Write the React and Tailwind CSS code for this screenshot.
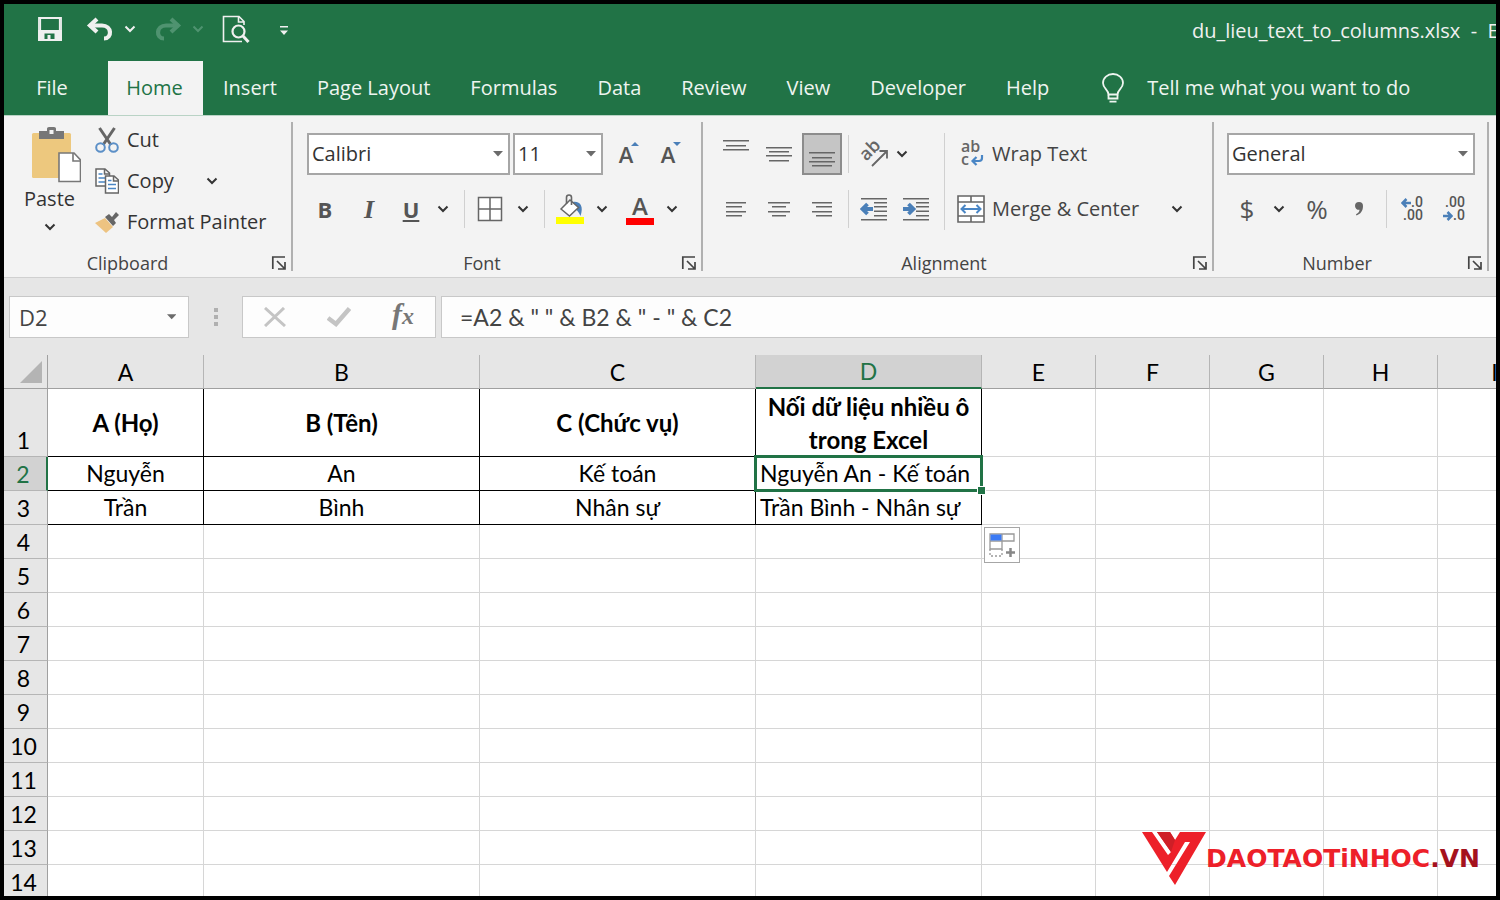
import clsx from "clsx";

const tabs = ["Insert", "Page Layout", "Formulas", "Data", "Review", "View", "Developer", "Help"];

const columns = [
  { name: "A", width: "w-[156px]" },
  { name: "B", width: "w-[276px]" },
  { name: "C", width: "w-[276px]" },
  { name: "D", width: "w-[226px]" },
  { name: "E", width: "w-[114px]" },
  { name: "F", width: "w-[114px]" },
  { name: "G", width: "w-[114px]" },
  { name: "H", width: "w-[114px]" },
  { name: "I", width: "w-[114px]" },
];

const rows = [
  ["A (Họ)", "B (Tên)", "C (Chức vụ)", "Nối dữ liệu nhiều ô trong Excel"],
  ["Nguyễn", "An", "Kế toán", "Nguyễn An - Kế toán"],
  ["Trần", "Bình", "Nhân sự", "Trần Bình - Nhân sự"],
  ...Array.from({ length: 11 }, () => []),
];

// [x, y, width] of every stroke in the alignment icons
const alignIcons = {
  top: [[1, 7, 26], [4, 12, 20], [1, 16, 26]],
  middle: [[1, 14, 26], [4, 18, 20], [1, 22, 26], [4, 27, 20]],
  bottom: [[1, 19, 26], [4, 24, 20], [1, 28, 26], [4, 32, 20]],
  left: [[4, 14, 20], [4, 18, 16], [4, 23, 20], [4, 27, 16]],
  center: [[3, 14, 22], [7, 18, 14], [3, 23, 22], [7, 27, 14]],
  right: [[4, 14, 20], [8, 18, 16], [4, 23, 20], [8, 27, 16]],
};

function Chevron({ className }) {
  return (
    <svg viewBox="0 0 12 8" className={clsx("h-2 w-3", className)} fill="none" stroke="currentColor" strokeWidth="2">
      <path d="M1.5 1.5 6 6l4.500-4.500" />
    </svg>
  );
}

function Triangle() {
  return (
    <svg viewBox="0 0 10 6" className="h-1.5 w-2.5 fill-[#6b6b6b]">
      <path d="M0 0h10L5 5.500z" />
    </svg>
  );
}

function ToolButton({ label, className = "w-10", children }) {
  return (
    <button type="button" aria-label={label} className={clsx("flex h-[42px] shrink-0 items-center justify-center text-[#555]", className)}>
      {children}
    </button>
  );
}

function ChevronButton({ label, className = "w-6" }) {
  return (
    <ToolButton label={label} className={className}>
      <Chevron className="shrink-0 text-[#333]" />
    </ToolButton>
  );
}

function Separator({ className = "ml-1.5" }) {
  return <div className={clsx("mr-1 h-[38px] w-px shrink-0 bg-[#d0d0d0]", className)} />;
}

function AlignIcon({ kind }) {
  return (
    <svg viewBox="0 0 28 42" className="h-[42px] w-7 shrink-0 fill-[#666]">
      {alignIcons[kind].map(([x, y, w]) => (
        <rect key={y} x={x} y={y} width={w} height="1.500" />
      ))}
    </svg>
  );
}

function IndentIcon({ increase }) {
  return (
    <svg viewBox="0 0 28 28" className="h-7 w-7 shrink-0">
      <g fill="#666">
        <rect x="1" y="3" width="26" height="1.500" />
        <rect x="14" y="7" width="13" height="1.500" />
        <rect x="14" y="11" width="13" height="1.500" />
        <rect x="14" y="15.500" width="13" height="1.500" />
        <rect x="14" y="20" width="13" height="1.500" />
        <rect x="1" y="24" width="26" height="1.500" />
      </g>
      <path
        d={increase ? "M1 14h10M6.500 9 11.500 14l-5 5" : "M13 14H3M7.500 9 2.500 14l5 5"}
        fill="none"
        stroke="#4a7fb8"
        strokeWidth="3.800"
      />
    </svg>
  );
}

function SelectBox({ label, value, className }) {
  return (
    <div className={clsx("relative h-[42px] shrink-0 border-2 border-[#a6a6a6] bg-white", className)}>
      <select aria-label={label} defaultValue={value} className="h-full w-full appearance-none bg-transparent pl-[3px] text-xl text-[#333] outline-none">
        <option>{value}</option>
      </select>
      <span className="pointer-events-none absolute inset-y-0 right-[5px] flex items-center">
        <Triangle />
      </span>
    </div>
  );
}

function RibbonGroup({ title, className, children }) {
  return (
    <section className={clsx("my-[6px] flex shrink-0 flex-col border-r-2 border-[#b0b0b0]", className)}>
      <div className="flex-1">{children}</div>
      <div className="flex h-4 items-center">
        <h2 className="flex-1 text-center text-lg leading-4 text-[#444]">{title}</h2>
        <button type="button" aria-label={`${title} settings`} className="flex w-10 justify-end pr-1">
          <svg viewBox="0 0 16 16" className="h-4 w-4" fill="none" stroke="#444" strokeWidth="1.700">
            <path d="M1.800 14V2H14M6 6l7.500 7.500M14 7v7H7" />
          </svg>
        </button>
      </div>
    </section>
  );
}

function TitleBar() {
  return (
    <header className="flex h-[57px] items-center text-[#f0f0f0]">
      <div className="flex shrink-0 items-center pb-2 pl-[34px]">
        <button type="button" aria-label="Save">
          <svg viewBox="0 0 24 24" className="h-6 w-6" fill="none" stroke="currentColor" strokeWidth="1.800">
            <path d="M1 1h22v22H1z" />
            <path d="M1 14h22v9H1z" fill="currentColor" />
            <path d="M2.500 2v12M21.500 2v12" strokeWidth="1.200" />
            <path d="M6.500 16.500h10V22h-10z" fill="#217346" stroke="none" />
            <path d="M9.500 18h3v5h-3z" fill="currentColor" stroke="none" />
          </svg>
        </button>
        <button type="button" aria-label="Undo" className="ml-6">
          <svg viewBox="0 0 28 24" className="h-6 w-7" fill="none" stroke="currentColor" strokeWidth="4.200">
            <path d="M11 2 4 8.500 11 15" />
            <path d="M3.500 8.500H16c10 0 10.500 13 2 13" />
          </svg>
        </button>
        <button type="button" aria-label="Undo history" className="ml-2.5"><Chevron /></button>
        <button type="button" aria-label="Redo" className="ml-[18px] text-[#4f9370]">
          <svg viewBox="0 0 28 24" className="h-6 w-7" fill="none" stroke="currentColor" strokeWidth="4.200">
            <path d="M17 2l7 6.500L17 15" />
            <path d="M24.500 8.500H12c-10 0-10.500 13-2 13" />
          </svg>
        </button>
        <button type="button" aria-label="Redo history" className="ml-2.5 text-[#4f9370]"><Chevron /></button>
        <button type="button" aria-label="Print preview" className="ml-[18px]">
          <svg viewBox="0 0 28 28" className="h-7 w-7" fill="none" stroke="currentColor" strokeWidth="1.600">
            <path d="M20 26.500H1.500v-25H17l5 5V10M16.500 1.500V7H22" />
            <circle cx="16.500" cy="16.500" r="6" strokeWidth="2.200" />
            <path d="m21 21 5.500 6" strokeWidth="3" />
          </svg>
        </button>
        <button type="button" aria-label="Customize toolbar" className="ml-[30px] pt-1">
          <svg viewBox="0 0 8 9" className="h-[9px] w-2" fill="currentColor">
            <path d="M0 0h8v1.600H0zM0 4.500h8L4 9z" />
          </svg>
        </button>
      </div>
      <h1 className="ml-auto w-[304px] shrink-0 overflow-hidden pb-1 text-xl whitespace-pre">
        {"du_lieu_text_to_columns.xlsx  -  Excel"}
      </h1>
    </header>
  );
}

function TabBar() {
  return (
    <nav className="flex h-[54px] items-stretch text-xl whitespace-nowrap text-[#eef5f0]">
      <button type="button" className="w-[104px] shrink-0 pr-2">File</button>
      <button type="button" className="w-[95px] shrink-0 bg-[#f3f3f3] pr-0.5 text-[#217346]">Home</button>
      {tabs.map((tab) => (
        <button key={tab} type="button" className="px-5">{tab}</button>
      ))}
      <button type="button" className="ml-8 flex items-center gap-[22px]">
        <svg viewBox="0 0 24 30" className="h-[30px] w-6" fill="none" stroke="currentColor" strokeWidth="1.800">
          <path d="M7.500 21.500c0-5-5.500-6-5.500-11.500a10 9 0 0 1 20 0c0 5.500-5.500 6.500-5.500 11.500z" />
          <path d="M7.500 21.500v4h9v-4M8.500 28.700h7" />
        </svg>
        Tell me what you want to do
      </button>
    </nav>
  );
}

function ClipboardGroup() {
  return (
    <RibbonGroup title="Clipboard" className="w-[289px]">
      <div className="flex">
        <button type="button" className="flex w-[91px] shrink-0 flex-col items-center pt-[5px] text-xl leading-7 text-[#333]">
          <svg viewBox="0 0 50 58" className="ml-3 h-[58px] w-[50px]">
            <rect x="1" y="6" width="39" height="45" rx="1.500" fill="#edc87e" />
            <path d="M8 4h8V1.500Q16 0 18 0h5q2 0 2 1.500V4h8v8H8z" fill="#777" />
            <rect x="18.500" y="3" width="4" height="4" fill="#f3f3f3" />
            <path d="M28 26h15l6.500 7v21.500H28z" fill="#fff" stroke="#777" strokeWidth="1.600" />
            <path d="M42 26v8h7.500" fill="none" stroke="#777" strokeWidth="1.600" />
          </svg>
          Paste
          <Chevron className="mt-2.5" />
        </button>
        <div className="flex flex-col gap-[5px] text-xl text-[#333]">
          <button type="button" className="flex h-9 items-center gap-2">
            <svg viewBox="0 0 24 26" className="h-[26px] w-6" fill="none">
              <path d="M4.500 1 16 18M19.500 1 8 18" stroke="#666" strokeWidth="3" />
              <circle cx="5.500" cy="20.500" r="4.300" stroke="#5b8fc7" strokeWidth="2" />
              <circle cx="18.500" cy="20.500" r="4.300" stroke="#5b8fc7" strokeWidth="2" />
            </svg>
            Cut
          </button>
          <div className="flex h-9 items-center">
            <button type="button" className="flex items-center gap-2">
              <svg viewBox="0 0 24 26" className="h-[26px] w-6" fill="#fff" stroke="#666" strokeWidth="1.500">
                <path d="M1 1h9l4.500 4v13H1zM9.500 1v5h5" />
                <path d="M3.500 6h4M3.500 10h7M3.500 14h7" stroke="#4a86c5" />
                <path d="M10.500 8H19l4.500 4v13h-13zM18.500 8v5h5" />
                <path d="M13 12.500h3.500M13 16.500h8M13 20.500h8" stroke="#4a86c5" />
              </svg>
              Copy
            </button>
            <ChevronButton label="Copy options" className="ml-6 w-7" />
          </div>
          <button type="button" className="flex h-9 items-center gap-2 whitespace-nowrap">
            <svg viewBox="0 0 24 24" className="h-6 w-6">
              <path d="m0 13 10-5 8 9-7 6z" fill="#edc381" />
              <path d="m10 7 4-3 3 3 4-5 3 3-5 5 2 3-3 3z" fill="#666" />
            </svg>
            Format Painter
          </button>
        </div>
      </div>
    </RibbonGroup>
  );
}

function FontGroup() {
  return (
    <RibbonGroup title="Font" className="w-[410px] pl-2.5">
      <div className="flex flex-col gap-[13px] pt-[11px]">
        <div className="ml-1 flex">
          <SelectBox label="Font" value="Calibri" className="w-[203px]" />
          <SelectBox label="Font size" value="11" className="ml-[3px] w-[90px]" />
          <ToolButton label="Increase font size" className="ml-1 w-11 text-[22px] font-semibold">
            A
            <svg viewBox="0 0 8 4" className="mb-5 -ml-0.5 h-1 w-2 fill-[#4a7fb8]"><path d="M0 4h8L4 0z" /></svg>
          </ToolButton>
          <ToolButton label="Decrease font size" className="w-10 text-[22px] font-semibold">
            A
            <svg viewBox="0 0 8 4" className="mb-5 -ml-0.5 h-1 w-2 fill-[#4a7fb8]"><path d="M0 0h8L4 4z" /></svg>
          </ToolButton>
        </div>
        <div className="flex items-center">
          <ToolButton label="Bold" className="w-11 text-[22px] font-bold">B</ToolButton>
          <ToolButton label="Italic" className="w-11 font-['Liberation_Serif',serif] text-[26px] font-bold italic">I</ToolButton>
          <ToolButton label="Underline" className="w-10 text-[22px] font-bold underline">U</ToolButton>
          <ChevronButton label="Underline options" />
          <Separator className="ml-[9px]" />
          <ToolButton label="Borders" className="w-[42px]">
            <svg viewBox="0 0 26 26" className="h-[26px] w-[26px]" fill="#fff" stroke="#666" strokeWidth="1.500">
              <path d="M1.500 1.500h23v23h-23zM13 1.500v23M1.500 13h23" />
            </svg>
          </ToolButton>
          <ChevronButton label="Border options" />
          <Separator className="ml-[9px]" />
          <ToolButton label="Fill color" className="w-[42px]">
            <svg viewBox="0 0 30 30" className="h-[30px] w-[30px]">
              <path d="M18 8c7-1 11 4 7.500 14-2-4-3-6-7.500-8z" fill="#4a7fb8" />
              <path d="m6 15 9-9 8.500 7.500L14.500 22z" fill="#fff" stroke="#666" strokeWidth="1.500" />
              <path d="M11.500 10V3.500Q11.500 1 14 1t2.500 2.500V11" fill="none" stroke="#666" strokeWidth="1.600" />
              <rect x="1" y="23" width="28" height="7" fill="#ff0" />
            </svg>
          </ToolButton>
          <ChevronButton label="Fill color options" className="w-[22px]" />
          <ToolButton label="Font color" className="ml-1.5 w-[42px] flex-col">
            <span className="text-2xl leading-6 font-semibold">A</span>
            <span className="h-[7px] w-7 bg-[#ff0000]" />
          </ToolButton>
          <ChevronButton label="Font color options" className="w-[22px]" />
        </div>
      </div>
    </RibbonGroup>
  );
}

function AlignmentGroup() {
  return (
    <RibbonGroup title="Alignment" className="w-[511px] pl-[13px]">
      <div className="flex pt-[11px]">
        <div className="flex flex-col gap-[13px]">
          <div className="flex items-center">
            <ToolButton label="Top align" className="mr-[3px] w-10"><AlignIcon kind="top" /></ToolButton>
            <ToolButton label="Middle align" className="mr-[3px] w-10"><AlignIcon kind="middle" /></ToolButton>
            <ToolButton label="Bottom align" className="w-10 border-2 border-[#8c8c8c] bg-[#c5c5c5]"><AlignIcon kind="bottom" /></ToolButton>
            <Separator />
            <ToolButton label="Orientation" className="w-[42px]">
              <svg viewBox="0 0 28 28" className="h-7 w-7 overflow-visible">
                <text textAnchor="middle" transform="translate(14 14) rotate(-45)" className="text-lg font-semibold" fill="#666">ab</text>
                <path d="M12 26 26 12M19.500 11H27v7.500" fill="none" stroke="#666" strokeWidth="1.800" />
              </svg>
            </ToolButton>
            <ChevronButton label="Orientation options" className="w-3.5" />
          </div>
          <div className="flex items-center">
            <ToolButton label="Align left" className="mr-[3px] w-10"><AlignIcon kind="left" /></ToolButton>
            <ToolButton label="Center" className="mr-[3px] w-10"><AlignIcon kind="center" /></ToolButton>
            <ToolButton label="Align right"><AlignIcon kind="right" /></ToolButton>
            <Separator />
            <ToolButton label="Decrease indent" className="w-[42px]"><IndentIcon /></ToolButton>
            <ToolButton label="Increase indent" className="w-[42px]"><IndentIcon increase /></ToolButton>
          </div>
        </div>
        <div className="ml-[7px] flex flex-col gap-[13px] border-l border-[#d0d0d0] pl-3 text-xl text-[#444]">
          <button type="button" className="flex h-[42px] items-center gap-[7px]">
            <svg viewBox="0 0 28 28" className="h-7 w-7">
              <text x="4" y="12" className="text-base font-semibold" fill="#666">ab</text>
              <text x="4" y="25" className="text-base font-semibold" fill="#666">c</text>
              <path d="M25 15v3q0 3-3 3h-6M19.500 17l-4 4 4 4" fill="none" stroke="#4a86c5" strokeWidth="2.200" />
            </svg>
            Wrap Text
          </button>
          <div className="flex items-center">
            <button type="button" className="flex h-[42px] items-center gap-[7px] whitespace-nowrap">
              <svg viewBox="0 0 28 28" className="h-7 w-7" fill="#fff" stroke="#666" strokeWidth="1.600">
                <path d="M1 1h26v26H1zM1 7h26M1 21h26M14 1v6M14 21v6" />
                <path d="M5 14h18M8.500 10 4.500 14l4 4M19.500 10l4 4-4 4" fill="none" stroke="#4a86c5" strokeWidth="2" />
              </svg>
              Merge &amp; Center
            </button>
            <ChevronButton label="Merge options" className="ml-[26px] w-6" />
          </div>
        </div>
      </div>
    </RibbonGroup>
  );
}

function DecimalArrow({ d }) {
  return (
    <svg viewBox="0 0 10 10" className="h-2.5 w-2.5" fill="none" stroke="#4a7fb8" strokeWidth="2.500">
      <path d={d} />
    </svg>
  );
}

function DecimalIcon({ increase }) {
  return (
    <span className="flex flex-col items-end font-[Roboto,sans-serif] text-sm leading-[13px] font-medium">
      <span className="flex items-center">
        {increase && <DecimalArrow d="M10 5H2M5.500 1 1.500 5l4 4" />}
        {increase ? ".0" : ".00"}
      </span>
      <span className="flex items-center">
        {!increase && <DecimalArrow d="M0 5h8M4.500 1l4 4-4 4" />}
        {increase ? ".00" : ".0"}
      </span>
    </span>
  );
}

function NumberGroup() {
  return (
    <RibbonGroup title="Number" className="w-[275px] pl-[13px]">
      <div className="flex flex-col gap-[13px] pt-[11px]">
        <SelectBox label="Number format" value="General" className="mr-3" />
        <div className="flex items-center">
          <ToolButton label="Accounting format" className="w-10 text-[26px] font-medium">$</ToolButton>
          <ChevronButton label="Accounting format options" />
          <ToolButton label="Percent" className="ml-[5px] w-[42px] text-[26px]">%</ToolButton>
          <ToolButton label="Comma style" className="w-[42px]">
            <svg viewBox="0 0 10 14" className="h-3.5 w-2.5 fill-[#666]">
              <path d="M1 4a4 4 0 0 1 8 0c0 5-2.500 8-6.500 9.500L2 12.300C4.500 11 5.500 9.500 5.500 7.700A3.800 3.800 0 0 1 1 4z" />
            </svg>
          </ToolButton>
          <Separator />
          <ToolButton label="Increase decimal" className="w-[42px]"><DecimalIcon increase /></ToolButton>
          <ToolButton label="Decrease decimal" className="w-[42px]"><DecimalIcon /></ToolButton>
        </div>
      </div>
    </RibbonGroup>
  );
}

function FormulaBar() {
  return (
    <div className="flex h-[77px] items-start bg-[#e6e6e6] pt-[18px] pl-[5px] text-[#444]">
      <div className="flex h-[42px] w-[180px] shrink-0 items-center border border-[#c8c8c8] bg-[#fdfdfd] pr-3">
        <input aria-label="Name box" defaultValue="D2" className="w-full min-w-0 bg-transparent pl-[9px] text-[22px] outline-none" />
        <Triangle />
      </div>
      <div className="flex h-[42px] w-[53px] shrink-0 flex-col items-center justify-center gap-[3px]">
        <span className="h-1 w-1 bg-[#b0b0b0]" />
        <span className="h-1 w-1 bg-[#b0b0b0]" />
        <span className="h-1 w-1 bg-[#b0b0b0]" />
      </div>
      <div className="flex h-[42px] w-[194px] shrink-0 items-center border border-[#c8c8c8] bg-[#fdfdfd]">
        <button type="button" aria-label="Cancel" className="flex w-16 justify-center">
          <svg viewBox="0 0 22 20" className="h-5 w-[22px]" fill="none" stroke="#c4c4c4" strokeWidth="3">
            <path d="m1 1 20 18M20 1 1 19" />
          </svg>
        </button>
        <button type="button" aria-label="Enter" className="flex w-16 justify-center">
          <svg viewBox="0 0 24 20" className="h-5 w-6" fill="none" stroke="#c4c4c4" strokeWidth="4.500">
            <path d="m1 11 8 6L22.500 1.500" />
          </svg>
        </button>
        <button type="button" aria-label="Insert function" className="w-16 pb-1 font-['Liberation_Serif',serif] text-3xl leading-8 font-bold text-[#777] italic">
          f<span className="text-2xl">x</span>
        </button>
      </div>
      <input
        aria-label="Formula"
        defaultValue={'=A2 & " " & B2 & " - " & C2'}
        className="ml-[5px] h-[42px] min-w-0 flex-1 border border-r-0 border-[#c8c8c8] bg-[#fdfdfd] pl-[18px] font-[Lato,sans-serif] text-[23px] outline-none"
      />
    </div>
  );
}

function FillOptions() {
  return (
    <button type="button" aria-label="Auto fill options" className="absolute top-[70px] left-[228px] z-10 flex h-9 w-9 items-center justify-center border border-[#a6a6a6] bg-white">
      <svg viewBox="0 0 28 28" className="h-7 w-7" fill="none" stroke="#999" strokeWidth="1.300">
        <path d="M2 3h24v7H2zM14 3v15H2V3" />
        <path d="M2.500 3.500h11v6h-11z" fill="#3b7af5" stroke="none" />
        <path d="M2 18v7h12v-7" strokeDasharray="2 2" />
        <path d="M18 21.500h9M22.500 17v9" stroke="#888" strokeWidth="2.500" />
      </svg>
    </button>
  );
}

function Cell({ row, col, value }) {
  const filled = row < 3 && col < 4;
  const active = row === 1 && col === 3;
  return (
    <td
      className={clsx(
        "border-r border-b px-1 py-0",
        filled ? "border-black" : "border-[#d6d6d6]",
        row === 0 ? "h-[68px] text-2xl leading-[33px] font-bold" : "h-[34px]",
        col === 3 && row > 0 ? "text-left whitespace-nowrap" : "text-center",
        active && "relative"
      )}
    >
      {value}
      {active && (
        <>
          <span className="absolute -top-0.5 -right-0.5 -bottom-0.5 -left-0.5 border-[3px] border-[#217346]" />
          <span className="absolute -right-[5px] -bottom-[5px] h-[9px] w-[9px] border border-white bg-[#217346]" />
          <FillOptions />
        </>
      )}
    </td>
  );
}

function Sheet() {
  return (
    <table className="w-[1548px] table-fixed border-separate border-spacing-0 font-[Lato,'Open_Sans',sans-serif] text-[23px] leading-[33px] text-black">
      <thead>
        <tr>
          <th className="h-[34px] w-11 border-r border-b border-[#a0a0a0] bg-[#e6e6e6] p-0">
            <svg viewBox="0 0 22 22" className="ml-4 h-[22px] w-[22px] fill-[#b4b4b4]" aria-hidden="true">
              <path d="M22 0v22H0z" />
            </svg>
          </th>
          {columns.map(({ name, width }) => (
            <th
              key={name}
              scope="col"
              className={clsx(
                "h-[34px] border-r border-r-[#b5b5b5] p-0 leading-8 font-normal",
                width,
                name === "D"
                  ? "border-b-2 border-b-[#217346] bg-[#d2d2d2] text-[#217346]"
                  : "border-b border-b-[#a0a0a0] bg-[#e6e6e6]"
              )}
            >
              {name}
            </th>
          ))}
        </tr>
      </thead>
      <tbody>
        {rows.map((cells, row) => (
          <tr key={row}>
            <th
              scope="row"
              className={clsx(
                "border-b border-b-[#b5b5b5] p-0 pr-1 align-bottom leading-8 font-normal",
                row === 1
                  ? "border-r-2 border-r-[#217346] bg-[#d2d2d2] text-[#217346]"
                  : "border-r border-r-[#a0a0a0] bg-[#e6e6e6]"
              )}
            >
              {row + 1}
            </th>
            {columns.map(({ name }, col) => (
              <Cell key={name} row={row} col={col} value={cells[col]} />
            ))}
          </tr>
        ))}
      </tbody>
    </table>
  );
}

function SiteLogo() {
  return (
    <div className="absolute right-4 bottom-2.5 flex items-center">
      <svg viewBox="0 0 64 54" className="h-[54px] w-16" aria-hidden="true">
        <path d="M0 0h10l16 23 3-3L15 0h13l5 8 5-8h26L33 53l-6-9 21-34h-5L25 40z" fill="#ed2029" />
        <path d="M15 0h13l5 8-4 12z" fill="#cf1f27" />
      </svg>
      <span className="font-['DejaVu_Sans',sans-serif] text-[25px] leading-6 font-bold text-[#ed2029]">
        DAOTAOTiNHOC<span className="text-[#a5121d]">.VN</span>
      </span>
    </div>
  );
}

export default function App() {
  return (
    <div className="relative flex h-screen flex-col overflow-hidden border-4 border-black bg-white font-['Open_Sans',sans-serif]">
      <div className="shrink-0 bg-[#217346]">
        <TitleBar />
        <TabBar />
      </div>
      <div className="flex h-[163px] shrink-0 overflow-hidden border-t border-b border-t-[#b9d3c5] border-b-[#d0d0d0] bg-[#f3f3f3]">
        <ClipboardGroup />
        <FontGroup />
        <AlignmentGroup />
        <NumberGroup />
      </div>
      <FormulaBar />
      <main className="min-h-0 flex-1 overflow-hidden">
        <Sheet />
      </main>
      <SiteLogo />
    </div>
  );
}
